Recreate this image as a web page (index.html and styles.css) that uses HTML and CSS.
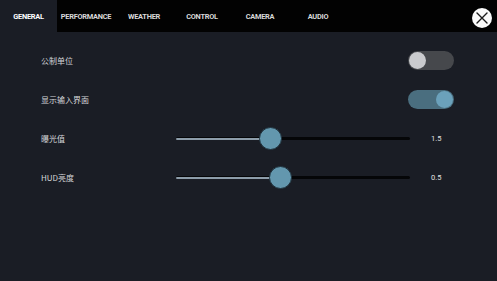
FILE: index.html
```html
<!DOCTYPE html>
<html lang="zh">
<head>
<meta charset="utf-8">
<link rel="stylesheet" href="styles.css">
</head>
<body>
<div class="app">
  <header class="tabbar">
    <nav class="tabs">
      <div class="tab active">GENERAL</div>
      <div class="tab">PERFORMANCE</div>
      <div class="tab">WEATHER</div>
      <div class="tab">CONTROL</div>
      <div class="tab">CAMERA</div>
      <div class="tab">AUDIO</div>
    </nav>
    <button class="close" aria-label="close">
      <svg width="20" height="20" viewBox="0 0 20 20">
        <path d="M5 5 L15 15 M15 5 L5 15" stroke="#1b1b1b" stroke-width="1.4" stroke-linecap="round"/>
      </svg>
    </button>
  </header>
  <main class="settings">
    <div class="row toggle-row">
      <span class="label">公制单位</span>
      <div class="toggle off"><span class="knob"></span></div>
    </div>
    <div class="row toggle-row">
      <span class="label">显示输入界面</span>
      <div class="toggle on"><span class="knob"></span></div>
    </div>
    <div class="row slider-row">
      <span class="label">曝光值</span>
      <div class="slider">
        <div class="fill" style="width:94px"></div>
        <div class="thumb" style="left:94px"></div>
      </div>
      <span class="value">1.5</span>
    </div>
    <div class="row slider-row">
      <span class="label">HUD亮度</span>
      <div class="slider">
        <div class="fill" style="width:104px"></div>
        <div class="thumb" style="left:104px"></div>
      </div>
      <span class="value">0.5</span>
    </div>
  </main>
</div>
</body>
</html>
```
FILE: styles.css
```css
* { box-sizing: border-box; }
html, body {
  margin: 0;
  padding: 0;
  width: 497px;
  height: 281px;
  overflow: hidden;
  background: #1a1d25;
}
.app {
  width: 497px;
  height: 281px;
  display: flex;
  flex-direction: column;
  font-family: Roboto, "Noto Sans CJK SC", sans-serif;
  color: #e6e6e6;
}
.tabbar {
  height: 32px;
  background: #020202;
  display: flex;
  align-items: stretch;
  justify-content: space-between;
}
.tabs {
  display: flex;
}
.tab {
  width: 58px;
  display: flex;
  align-items: center;
  justify-content: center;
  font-size: 7.4px;
  font-weight: 700;
  letter-spacing: -0.25px;
  color: #d8d8d8;
  padding-top: 1px;
}
.tab.active {
  width: 57px;
  background: #1a1d25;
  color: #ffffff;
}
.close {
  margin: 8px 5px 0 0;
  width: 20px;
  height: 20px;
  border-radius: 50%;
  border: none;
  padding: 0;
  background: #fafafa;
  display: flex;
  align-items: center;
  justify-content: center;
}
.settings {
  flex: 1;
  padding: 9px 43px 0 41px;
  display: flex;
  flex-direction: column;
}
.row {
  height: 39px;
  align-items: center;
}
.label {
  font-family: "Noto Sans CJK SC", sans-serif;
  font-size: 8px;
  color: #d4d6d9;
}
.toggle-row {
  display: flex;
  justify-content: space-between;
}
.toggle {
  position: relative;
  width: 46px;
  height: 19px;
  border-radius: 10px;
}
.toggle.off { background: #46484c; }
.toggle.on { background: #4a6e7f; }
.knob {
  position: absolute;
  top: 1px;
  width: 17px;
  height: 17px;
  border-radius: 50%;
}
.toggle.off .knob { left: 1px; background: #cacbce; }
.toggle.on .knob { right: 1px; background: #6ba1bb; }
.slider-row {
  display: grid;
  grid-template-columns: 135px 234px 1fr;
}
.slider {
  position: relative;
  height: 3px;
  background: #050608;
  border-radius: 2px;
}
.fill {
  position: absolute;
  left: 0;
  top: 0.5px;
  height: 2px;
  background: #8d9daa;
  border-radius: 1px;
}
.thumb {
  position: absolute;
  top: 50%;
  width: 23px;
  height: 23px;
  margin: -11.5px 0 0 -11.5px;
  border-radius: 50%;
  background: #6397ae;
  border: 1.5px solid #20323d;
}
.value {
  padding-left: 21px;
  font-size: 7.5px;
  color: #e3e3e3;
}
```
